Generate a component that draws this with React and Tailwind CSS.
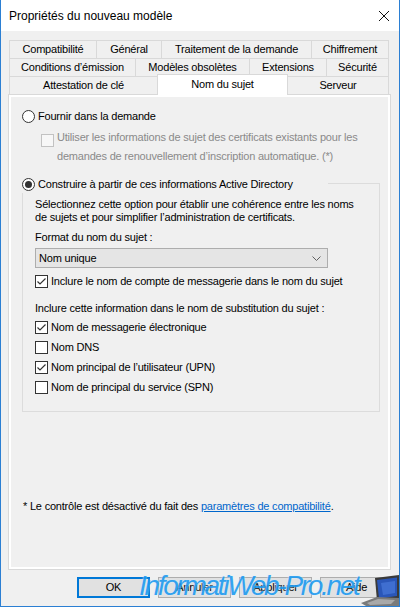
import React from "react";

const Tab = ({ w, children, last }) => (
  <div
    className={`h-full flex items-center justify-center bg-[#f0f0f0] border-t border-l border-[#d9d9d9] ${last ? "border-r" : ""}`}
    style={{ width: w }}
  >
    {children}
  </div>
);

const Check = ({ checked, disabled }) => (
  <span
    className={`w-[13px] h-[13px] shrink-0 border flex items-center justify-center ${
      disabled ? "border-[#c2c2c2] bg-[#f7f7f7]" : "border-[#333333] bg-white"
    }`}
  >
    {checked && (
      <svg width="11" height="11" viewBox="0 0 11 11">
        <path d="M1.5 5.5 L4 8 L9.5 2.5" stroke="#333" strokeWidth="1.2" fill="none" />
      </svg>
    )}
  </span>
);

const Radio = ({ checked }) => (
  <span className="w-[13px] h-[13px] shrink-0 rounded-full border border-[#333333] bg-white flex items-center justify-center">
    {checked && <span className="w-[7px] h-[7px] rounded-full bg-[#333333]" />}
  </span>
);

const Btn = ({ children, primary }) => (
  <div
    className={`w-[73px] h-[21px] flex items-center justify-center bg-[#e1e1e1] ${
      primary ? "border-2 border-[#0078d7]" : "border border-[#adadad]"
    }`}
  >
    {children}
  </div>
);

export default function App() {
  return (
    <div className="w-[400px] h-[607px] relative overflow-hidden bg-[#f0f0f0] border-x border-b border-[#2b7fd3] font-['Liberation_Sans',Arial,sans-serif] text-[11px] tracking-[-0.2px] text-black leading-none">
      {/* Title bar */}
      <div className="h-[31px] bg-white flex items-center justify-between pl-[8px] pr-[10px]">
        <span className="text-[12px] tracking-normal">Propriétés du nouveau modèle</span>
        <svg width="10" height="10" viewBox="0 0 10 10">
          <path d="M0 0 L10 10 M10 0 L0 10" stroke="#111" strokeWidth="1" />
        </svg>
      </div>

      {/* Tabs */}
      <div className="mt-[9px] ml-[8px] w-[380px]">
        <div className="flex h-[18px]">
          <Tab w={87}>Compatibilité</Tab>
          <Tab w={65}>Général</Tab>
          <Tab w={150}>Traitement de la demande</Tab>
          <Tab w={78} last>Chiffrement</Tab>
        </div>
        <div className="flex h-[18px]">
          <Tab w={126}>Conditions d’émission</Tab>
          <Tab w={114}>Modèles obsolètes</Tab>
          <Tab w={77}>Extensions</Tab>
          <Tab w={63} last>Sécurité</Tab>
        </div>
        <div className="flex h-[18px]">
          <Tab w={148}>Attestation de clé</Tab>
          <div className="relative z-10 self-start -mt-[2px] w-[131px] h-[21px] bg-white border-t border-l border-r border-[#d9d9d9] flex justify-center pt-[4px]">
            Nom du sujet
          </div>
          <div className="h-full w-[101px] flex items-center justify-center bg-[#f0f0f0] border-t border-r border-[#d9d9d9]">
            Serveur
          </div>
        </div>
      </div>

      {/* Panel */}
      <div className="ml-[7px] w-[383px] h-[476px] border border-[#d9d9d9]">
        <div className="h-full border-2 border-white bg-[#f0f0f0] flex flex-col">
          {/* Radio 1 */}
          <div className="mt-[10px] h-[18px] pl-[11px] flex items-center">
            <Radio />
            <span className="ml-[3px]">Fournir dans la demande</span>
          </div>
          {/* Disabled checkbox */}
          <div className="mt-[3px] pl-[30px] flex items-start">
            <span className="mt-[6px]">
              <Check disabled />
            </span>
            <span className="ml-[3px] leading-[19px] text-[#8a8a8a]">
              Utiliser les informations de sujet des certificats existants pour les
              <br />
              demandes de renouvellement d’inscription automatique. (*)
            </span>
          </div>
          {/* Radio 2 with group header */}
          <div className="mt-[9px] h-[18px] pl-[11px] flex">
            <div className="w-[306px] flex items-center">
              <Radio checked />
              <span className="ml-[3px]">Construire à partir de ces informations Active Directory</span>
            </div>
            <div className="w-[52px] mt-[8px] h-[10px] border-t border-r border-[#dcdcdc]" />
          </div>
          {/* Group body */}
          <div className="ml-[11px] w-[358px] h-[219px] border-l border-r border-b border-[#dcdcdc] pl-[12px] pt-[5px] flex flex-col">
            <div className="leading-[13px]">
              Sélectionnez cette option pour établir une cohérence entre les noms
              <br />
              de sujets et pour simplifier l’administration de certificats.
            </div>
            <div className="mt-[7px] leading-[13px]">Format du nom du sujet :</div>
            <div className="mt-[4px] w-[293px] h-[20px] border border-[#adadad] bg-[#e5e5e5] flex items-center justify-between pl-[3px] pr-[6px]">
              <span>Nom unique</span>
              <svg width="9" height="5" viewBox="0 0 9 5">
                <path d="M0.5 0.5 L4.5 4.5 L8.5 0.5" stroke="#606060" strokeWidth="1" fill="none" />
              </svg>
            </div>
            <div className="mt-[4px] h-[18px] flex items-center">
              <Check checked />
              <span className="ml-[3px]">Inclure le nom de compte de messagerie dans le nom du sujet</span>
            </div>
            <div className="mt-[12px] leading-[13px]">
              Inclure cette information dans le nom de substitution du sujet :
            </div>
            <div className="mt-[2px] flex flex-col">
              <div className="h-[20px] flex items-center">
                <Check checked />
                <span className="ml-[3px]">Nom de messagerie électronique</span>
              </div>
              <div className="h-[20px] flex items-center">
                <Check />
                <span className="ml-[3px]">Nom DNS</span>
              </div>
              <div className="h-[20px] flex items-center">
                <Check checked />
                <span className="ml-[3px]">Nom principal de l’utilisateur (UPN)</span>
              </div>
              <div className="h-[20px] flex items-center">
                <Check />
                <span className="ml-[3px]">Nom de principal du service (SPN)</span>
              </div>
            </div>
          </div>
          {/* Footer note */}
          <div className="mt-[88px] pl-[12px] leading-[13px]">
            * Le contrôle est désactivé du fait des{" "}
            <span className="text-[#0066cc] underline">paramètres de compatibilité</span>.
          </div>
        </div>
      </div>

      {/* Buttons */}
      <div className="mt-[7px] flex justify-end gap-[8px] pr-[6px]">
        <Btn primary>OK</Btn>
        <Btn>Annuler</Btn>
        <Btn>Appliquer</Btn>
        <Btn>Aide</Btn>
      </div>

      {/* Watermark */}
      <div className="absolute left-[138px] top-[572px] text-[28px] italic tracking-[-2.3px] leading-none text-[#1f9bf0] opacity-90 font-['Liberation_Sans',Arial,sans-serif] [text-shadow:0_0_2px_#d8f0ff]">
        InformatiWeb-Pro.net
      </div>
      <svg className="absolute right-0 bottom-0" width="38" height="31" viewBox="0 0 38 31">
        <polygon points="14,3 38,0 38,23 16,26" fill="#3a3a3a" />
        <polygon points="16,5 36,2.5 36,21 18,23.5" fill="#2a56b8" />
        <polygon points="20,8 34,6 34,18 22,20" fill="#4f7fe0" opacity="0.6" />
        <polygon points="0,28 16,22 38,23 38,31 5,31" fill="#7a7a7a" />
        <polygon points="6,28 17,24 34,25 30,29 9,30" fill="#a9a9a9" />
      </svg>
    </div>
  );
}
